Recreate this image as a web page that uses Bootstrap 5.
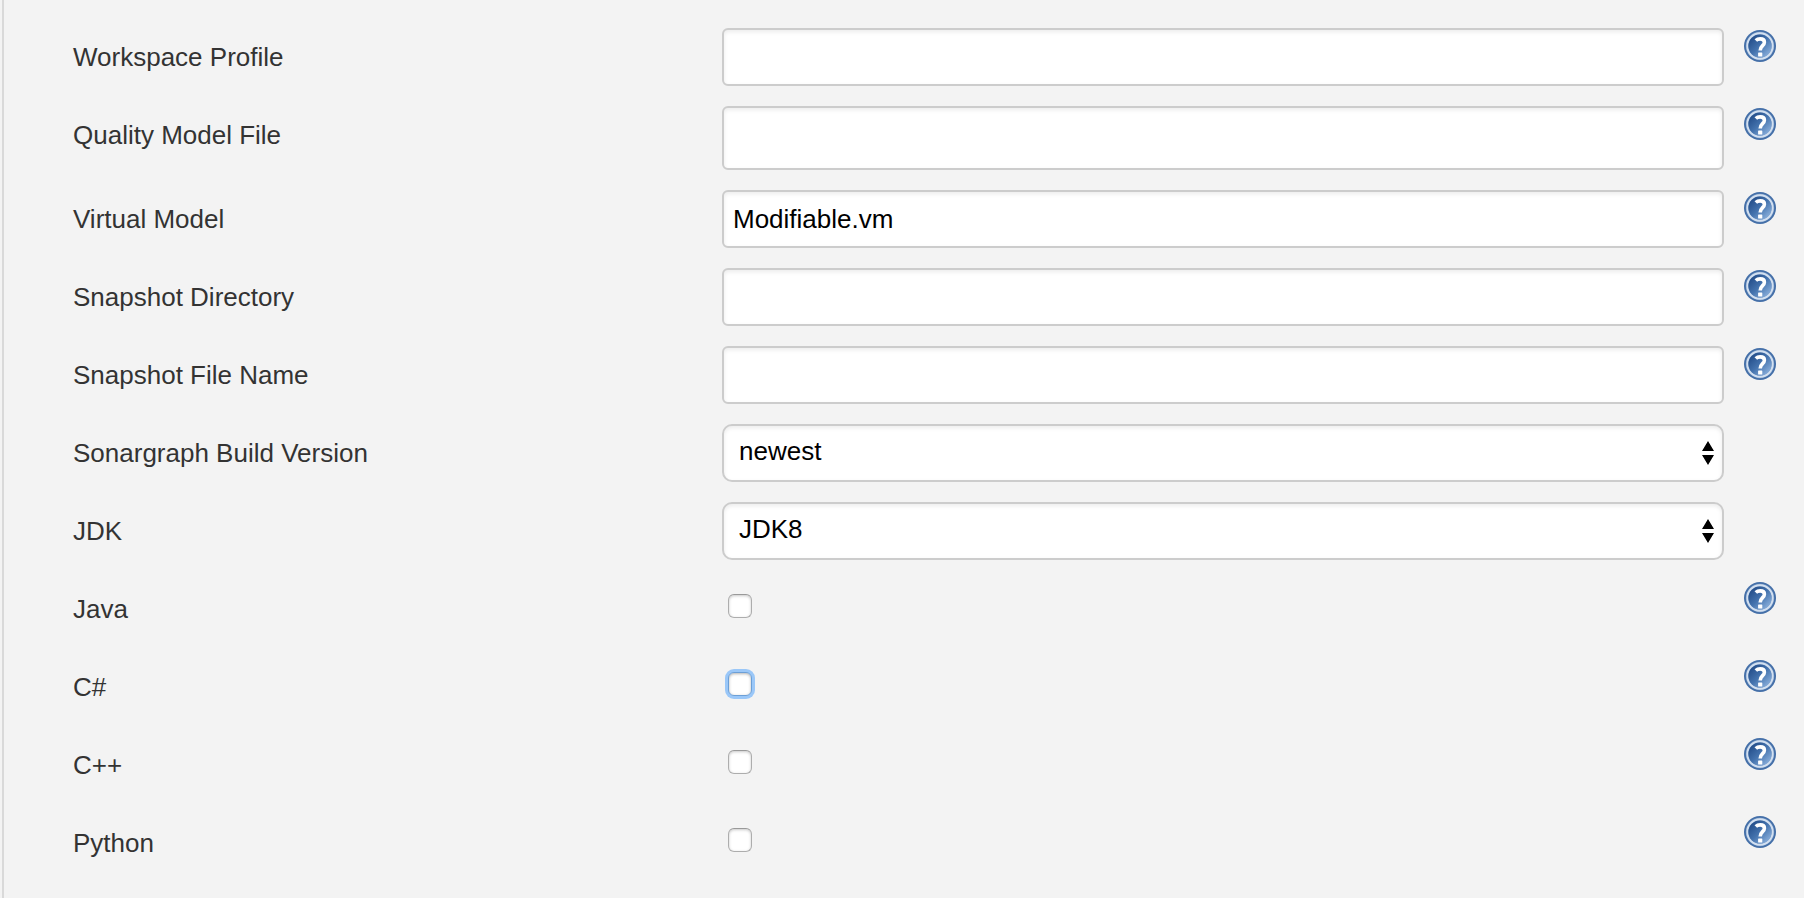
<!DOCTYPE html>
<html lang="en">
<head>
<meta charset="utf-8">
<meta name="viewport" content="width=device-width, initial-scale=1">
<title>Sonargraph configuration</title>
<link href="https://cdn.jsdelivr.net/npm/bootstrap@5.3.0/dist/css/bootstrap.min.css" rel="stylesheet">
<style>
  body {
    background: #f3f3f3;
    color: #333;
    font-family: "Liberation Sans", Arial, Helvetica, sans-serif;
    font-size: 26px;
    line-height: 30px;
  }
  .settings {
    border-left: 2px solid #d9d9d9;
    margin-left: 2px;
    padding: 28px 28px 0 69px;
  }
  .setting {
    display: grid;
    grid-template-columns: minmax(0, 649fr) minmax(0, 1002fr) 52px;
    align-items: start;
    margin-bottom: 20px;
  }
  .setting-label { padding: 14px 0; }
  .settings .form-control,
  .settings .form-select {
    border: 2px solid #ccc;
    color: #000;
    font-size: 26px;
    line-height: 30px;
    background-color: #fff;
    box-shadow: inset 0 2px 4px rgba(0, 0, 0, .08);
  }
  .settings .form-control {
    border-radius: 6px;
    padding: 12px 9px;
  }
  .settings .form-control.taller { padding: 15px 9px; }
  .settings .form-select {
    height: 58px;
    border-radius: 10px;
    padding: 10px 36px 14px 15px;
    background-image: url("data:image/svg+xml,%3Csvg xmlns='http://www.w3.org/2000/svg' viewBox='0 0 12 24'%3E%3Cpath d='M6 0l6 10H0zM6 24L0 14h12z'/%3E%3C/svg%3E");
    background-position: right 8px center;
    background-size: 12px 24px;
  }
  .settings .form-check-input {
    display: block;
    width: 24px;
    height: 24px;
    margin: 14px 6px;
    border: 1px solid #adadad;
    border-top-color: #999;
    border-radius: 6px;
    background-color: #fff;
    box-shadow: inset 0 1px 3px rgba(0, 0, 0, .22);
  }
  .settings .form-check-input:focus {
    border-color: #6c9fd6;
    box-shadow: 0 0 0 3px #9ac7f8, inset 0 1px 3px rgba(0, 0, 0, .3);
  }
  .help-link { margin: 2px 0 0 20px; }
  .help-link svg { display: block; width: 32px; height: 32px; }
</style>
</head>
<body>
<svg width="0" height="0" class="position-absolute" aria-hidden="true">
  <defs>
    <linearGradient id="disc" x1="0" y1="0" x2="1" y2="1">
      <stop offset=".15" stop-color="#26508c"/>
      <stop offset=".5" stop-color="#4473ae"/>
      <stop offset=".9" stop-color="#8bb0dc"/>
    </linearGradient>
    <symbol id="help" viewBox="0 0 32 32">
      <circle cx="16" cy="16" r="16" fill="#446fa8"/>
      <circle cx="16" cy="16" r="14.200" fill="#7f9fc8"/>
      <circle cx="16" cy="16" r="12.700" fill="none" stroke="#d3e0f0" stroke-width="1.900"/>
      <circle cx="16" cy="16" r="11.600" fill="url(#disc)"/>
      <path d="M11.800 10.600C13 9.400 14.500 8.900 16.200 8.900c2.600 0 4.200 1.200 4.200 3.300 0 3.500-4.200 3.500-4.200 8.400" fill="none" stroke="#fff" stroke-width="3.600"/>
      <rect x="14.100" y="22.400" width="4.200" height="4.200" rx=".6" fill="#fff"/>
    </symbol>
  </defs>
</svg>

<main>
  <form class="settings min-vh-100">
    <div class="setting">
      <label class="setting-label" for="profile">Workspace Profile</label>
      <input class="form-control" type="text" id="profile">
      <a class="help-link" href="#" aria-label="Help for Workspace Profile"><svg><use href="#help"/></svg></a>
    </div>
    <div class="setting">
      <label class="setting-label" for="quality">Quality Model File</label>
      <input class="form-control taller" type="text" id="quality">
      <a class="help-link" href="#" aria-label="Help for Quality Model File"><svg><use href="#help"/></svg></a>
    </div>
    <div class="setting">
      <label class="setting-label" for="virtual">Virtual Model</label>
      <input class="form-control" type="text" id="virtual" value="Modifiable.vm">
      <a class="help-link" href="#" aria-label="Help for Virtual Model"><svg><use href="#help"/></svg></a>
    </div>
    <div class="setting">
      <label class="setting-label" for="snapdir">Snapshot Directory</label>
      <input class="form-control" type="text" id="snapdir">
      <a class="help-link" href="#" aria-label="Help for Snapshot Directory"><svg><use href="#help"/></svg></a>
    </div>
    <div class="setting">
      <label class="setting-label" for="snapfile">Snapshot File Name</label>
      <input class="form-control" type="text" id="snapfile">
      <a class="help-link" href="#" aria-label="Help for Snapshot File Name"><svg><use href="#help"/></svg></a>
    </div>
    <div class="setting">
      <label class="setting-label" for="build">Sonargraph Build Version</label>
      <select class="form-select" id="build"><option selected>newest</option></select>
    </div>
    <div class="setting">
      <label class="setting-label" for="jdk">JDK</label>
      <select class="form-select" id="jdk"><option selected>JDK8</option></select>
    </div>
    <div class="setting">
      <label class="setting-label" for="java">Java</label>
      <input class="form-check-input" type="checkbox" id="java">
      <a class="help-link" href="#" aria-label="Help for Java"><svg><use href="#help"/></svg></a>
    </div>
    <div class="setting">
      <label class="setting-label" for="csharp">C#</label>
      <input class="form-check-input" type="checkbox" id="csharp" autofocus>
      <a class="help-link" href="#" aria-label="Help for C#"><svg><use href="#help"/></svg></a>
    </div>
    <div class="setting">
      <label class="setting-label" for="cpp">C++</label>
      <input class="form-check-input" type="checkbox" id="cpp">
      <a class="help-link" href="#" aria-label="Help for C++"><svg><use href="#help"/></svg></a>
    </div>
    <div class="setting">
      <label class="setting-label" for="python">Python</label>
      <input class="form-check-input" type="checkbox" id="python">
      <a class="help-link" href="#" aria-label="Help for Python"><svg><use href="#help"/></svg></a>
    </div>
  </form>
</main>
<script src="https://cdn.jsdelivr.net/npm/bootstrap@5.3.0/dist/js/bootstrap.bundle.min.js"></script>
</body>
</html>
